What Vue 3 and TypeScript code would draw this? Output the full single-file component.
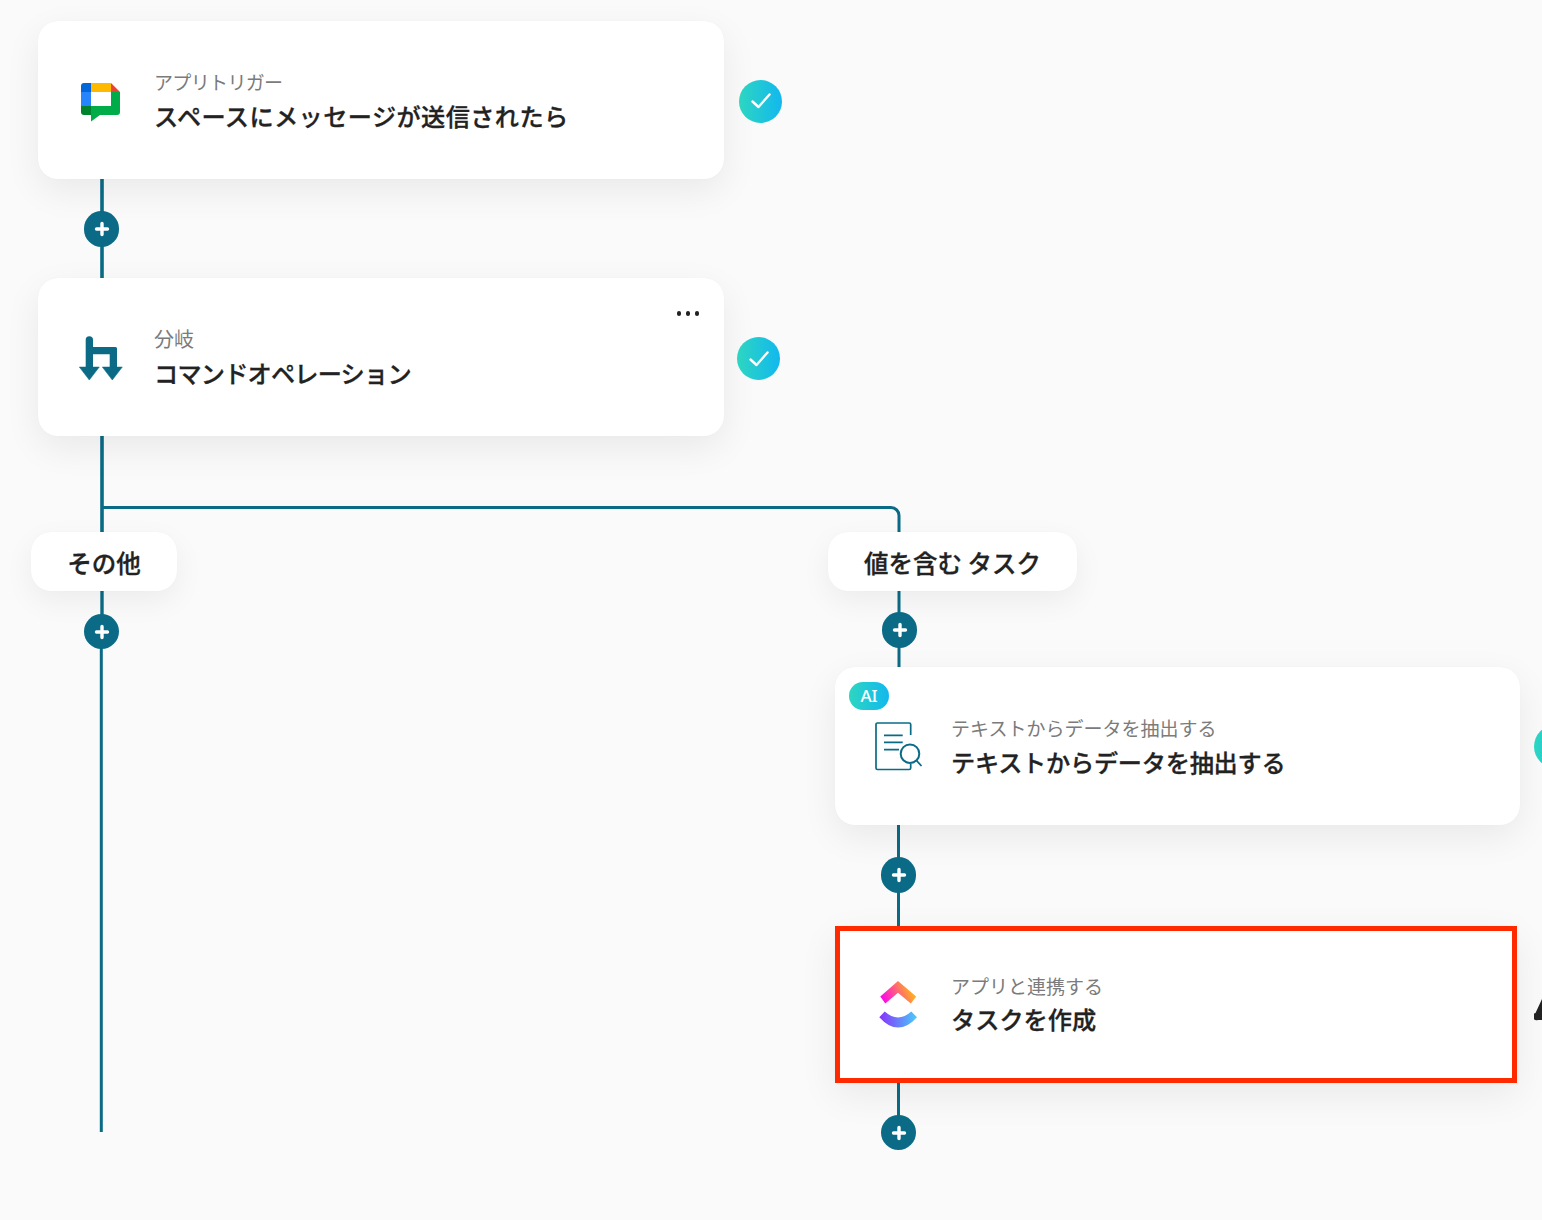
<script setup lang="ts">
interface PlusNode { x: number; y: number }
const pluses: PlusNode[] = [
  { x: 101.5, y: 229 },
  { x: 101.5, y: 631.5 },
  { x: 899.5, y: 630 },
  { x: 898.5, y: 875 },
  { x: 898.5, y: 1132.5 },
]
const checks: PlusNode[] = [
  { x: 760.5, y: 101 },
  { x: 758.5, y: 358.5 },
]
function at(x: number, y: number) {
  return { left: x + 'px', top: y + 'px' }
}
</script>

<template>
  <main class="canvas">
    <svg class="wires" width="1542" height="1220" viewBox="0 0 1542 1220" fill="none">
      <path d="M102 178V280" stroke-width="3.6" />
      <path d="M102 434V534" stroke-width="3.6" />
      <path d="M102 507.5H891a8 8 0 0 1 8 8V534" stroke-width="3" />
      <path d="M102 590V632" stroke-width="3.4" />
      <path d="M101.3 632V1132" stroke-width="3" />
      <path d="M899 590V668" stroke-width="3" />
      <path d="M898.5 824V928" stroke-width="3" />
      <path d="M898.5 1082V1132" stroke-width="3" />
    </svg>

    <section class="card c1">
      <div class="icon">
        <svg width="40" height="40" viewBox="0 0 40 40">
          <path d="M30 1H10V10H30Z" fill="#ffba00" />
          <path d="M3 1H10V10H0V4A3 3 0 0 1 3 1Z" fill="#0066da" />
          <path d="M0 10H10V24H0Z" fill="#2684fc" />
          <path d="M0 24H10V33H3A3 3 0 0 1 0 30Z" fill="#00832d" />
          <path d="M30 1L39 10H30Z" fill="#ea4335" />
          <path d="M30 10H39V30A3 3 0 0 1 36 33H19L10 39.500V24H30Z" fill="#00ac47" />
        </svg>
      </div>
      <div class="text">
        <p class="sub s-kana">アプリトリガー</p>
        <p class="title t-wide">スペースにメッセージが送信されたら</p>
      </div>
    </section>

    <section class="card c2">
      <div class="icon">
        <svg width="46" height="46" viewBox="0 0 46 46" fill="#0b6b86">
          <g transform="translate(-1 -1)">
            <path d="M8.700 4.800A3.600 3.600 0 0 1 16 4.800V12H38.500A1.500 1.500 0 0 1 40 13.500V33H32.700V19.300H16V33H8.700Z" />
            <path d="M2.300 32H22.300L12.300 45Z" stroke="#0b6b86" stroke-width="0.5" stroke-linejoin="round" />
            <path d="M25.700 32H45.700L35.700 45Z" stroke="#0b6b86" stroke-width="0.5" stroke-linejoin="round" transform="translate(-0.400 0)" />
          </g>
        </svg>
      </div>
      <div class="text">
        <p class="sub s-kanji">分岐</p>
        <p class="title t-narrow">コマンドオペレーション</p>
      </div>
      <div class="dots"><span></span><span></span><span></span></div>
    </section>

    <div class="pill p1">その他</div>
    <div class="pill p2">値を含む タスク</div>

    <section class="card c3">
      <span class="ai">AI</span>
      <div class="icon">
        <svg width="54" height="54" viewBox="0 0 54 54" fill="none" stroke="#0b6b86" stroke-width="1.700">
          <path d="M39.700 16V5.500A1.500 1.500 0 0 0 38.200 4H6.500A1.500 1.500 0 0 0 5 5.500V49A1.500 1.500 0 0 0 6.500 50.500H38.200A1.500 1.500 0 0 0 39.700 49V45" />
          <path d="M13 16.300H31.700M13 23.300H31.700M13 30.700H28" />
          <circle cx="39" cy="34.700" r="9.300" stroke-width="2" />
          <path d="M45.500 41.500L50.500 47" stroke-width="1.800" />
        </svg>
      </div>
      <div class="text">
        <p class="sub">テキストからデータを抽出する</p>
        <p class="title t-slight">テキストからデータを抽出する</p>
      </div>
    </section>

    <section class="card c4">
      <div class="icon">
        <svg width="40" height="54" viewBox="0 0 40 54" fill="none">
          <defs>
            <linearGradient id="cuTop" x1="0" y1="0.7" x2="1" y2="0.4">
              <stop offset="0" stop-color="#ff02f0" />
              <stop offset="1" stop-color="#ffc800" />
            </linearGradient>
            <linearGradient id="cuBottom" x1="0" y1="0.5" x2="1" y2="0.5">
              <stop offset="0" stop-color="#8930fd" />
              <stop offset="1" stop-color="#49ccf9" />
            </linearGradient>
          </defs>
          <path d="M20 1L38.200 16.400L32.800 23.400L20 12.700L7.300 23.400L2.300 16.400Z" fill="url(#cuTop)" />
          <path d="M1.300 37.200L6.700 31.500Q20 43.300 33.300 31.500L39 37.200Q20 58 1.300 37.200Z" fill="url(#cuBottom)" />
        </svg>
      </div>
      <div class="text">
        <p class="sub">アプリと連携する</p>
        <p class="title">タスクを作成</p>
      </div>
    </section>

    <div v-for="(p, i) in pluses" :key="'plus' + i" class="plus" :style="at(p.x, p.y)">
      <svg width="16" height="16" viewBox="0 0 16 16"><path d="M8 2.500V13.500M2.500 8H13.500" stroke="#fff" stroke-width="3.400" stroke-linecap="round" /></svg>
    </div>

    <div v-for="(c, i) in checks" :key="'check' + i" class="check" :style="at(c.x, c.y)">
      <svg width="24" height="24" viewBox="0 0 24 24" fill="none"><path d="M3.500 12.500L9.500 18L20.500 5.500" stroke="#fff" stroke-width="2.400" stroke-linecap="round" stroke-linejoin="round" /></svg>
    </div>
    <div class="check" :style="at(1555.5, 746)"></div>
    <svg class="peek" width="8" height="24" viewBox="0 0 8 24"><path d="M8 1L1.500 15A3.500 3.500 0 0 0 4 22H8Z" fill="#222" /></svg>
  </main>
</template>

<style scoped>
.canvas {
  position: relative;
  width: 1542px;
  height: 1220px;
  overflow: hidden;
  background: #fafafa;
  font-family: "Noto Sans CJK JP", "Noto Sans", sans-serif;
  color: #222;
}
.wires {
  position: absolute;
  left: 0;
  top: 0;
}
.wires path {
  stroke: #0b6b86;
}
.card {
  position: absolute;
  box-sizing: border-box;
  display: flex;
  align-items: center;
  background: #fff;
  border-radius: 20px;
  padding-left: 36px;
  box-shadow: 0 0 1px rgba(0, 0, 0, 0.06), 0 12px 36px rgba(0, 0, 0, 0.07);
}
.c1 { left: 38px; top: 21px; width: 686px; height: 158px; }
.c2 { left: 38px; top: 278px; width: 686px; height: 158px; }
.c3 { left: 835px; top: 667px; width: 685px; height: 158px; }
.c4 {
  left: 835px;
  top: 926px;
  width: 682px;
  height: 157px;
  border: 5px solid #ff2a00;
  border-radius: 0;
  padding-left: 31px;
}
.icon {
  flex: none;
  width: 54px;
  height: 54px;
  margin-right: 26px;
  margin-top: 4px;
  display: flex;
  align-items: center;
  justify-content: center;
}
.c3 .icon { margin-top: 0; }
.c4 .icon { margin-top: 4px; }
.text {
  display: flex;
  flex-direction: column;
  gap: 4px;
  margin-top: 2px;
}
.c4 .text {
  gap: 3px;
  margin-top: 0;
}
.sub {
  margin: 0;
  font-size: 19px;
  line-height: 26px;
  color: #7b7b7b;
}
.s-kana { letter-spacing: -0.650px; }
.s-kanji { font-size: 20px; }
.title {
  margin: 0;
  font-size: 24.200px;
  line-height: 34px;
  font-weight: 500;
  -webkit-text-stroke: 0.3px #222;
  color: #222;
}
.t-wide { letter-spacing: 0.400px; }
.t-narrow { letter-spacing: -0.800px; }
.t-slight { letter-spacing: -0.250px; }
.dots {
  position: absolute;
  right: 25px;
  top: 33px;
  display: flex;
  gap: 4.500px;
}
.dots span {
  width: 4.500px;
  height: 4.500px;
  border-radius: 50%;
  background: #222;
}
.pill {
  position: absolute;
  box-sizing: border-box;
  top: 532px;
  height: 59px;
  padding-top: 2px;
  display: flex;
  align-items: center;
  justify-content: center;
  background: #fff;
  border-radius: 20px;
  font-size: 24.500px;
  font-weight: 500;
  -webkit-text-stroke: 0.3px #222;
  color: #222;
  box-shadow: 0 0 1px rgba(0, 0, 0, 0.06), 0 10px 30px rgba(0, 0, 0, 0.06);
}
.p1 { left: 31px; width: 146px; }
.p2 { left: 828px; width: 249px; }
.ai {
  position: absolute;
  left: 14px;
  top: 15px;
  width: 40px;
  height: 28px;
  padding-bottom: 2px;
  box-sizing: border-box;
  display: flex;
  align-items: center;
  justify-content: center;
  border-radius: 14px;
  background: linear-gradient(90deg, #2dd6c1, #12b8ee);
  color: #fff;
  font-family: "Noto Sans", sans-serif;
  font-size: 17px;
  font-weight: 500;
}
.plus {
  position: absolute;
  width: 35.500px;
  height: 35.500px;
  margin: -17.750px 0 0 -17.750px;
  display: flex;
  align-items: center;
  justify-content: center;
  border-radius: 50%;
  background: #0b6b86;
}
.check {
  position: absolute;
  width: 43px;
  height: 43px;
  margin: -21.500px 0 0 -21.500px;
  display: flex;
  align-items: center;
  justify-content: center;
  border-radius: 50%;
  background: linear-gradient(90deg, #2dd6c1, #12b8ee);
}
.peek {
  position: absolute;
  left: 1534px;
  top: 998px;
}
</style>

<style>
html, body { margin: 0; background: #fafafa; }
</style>
